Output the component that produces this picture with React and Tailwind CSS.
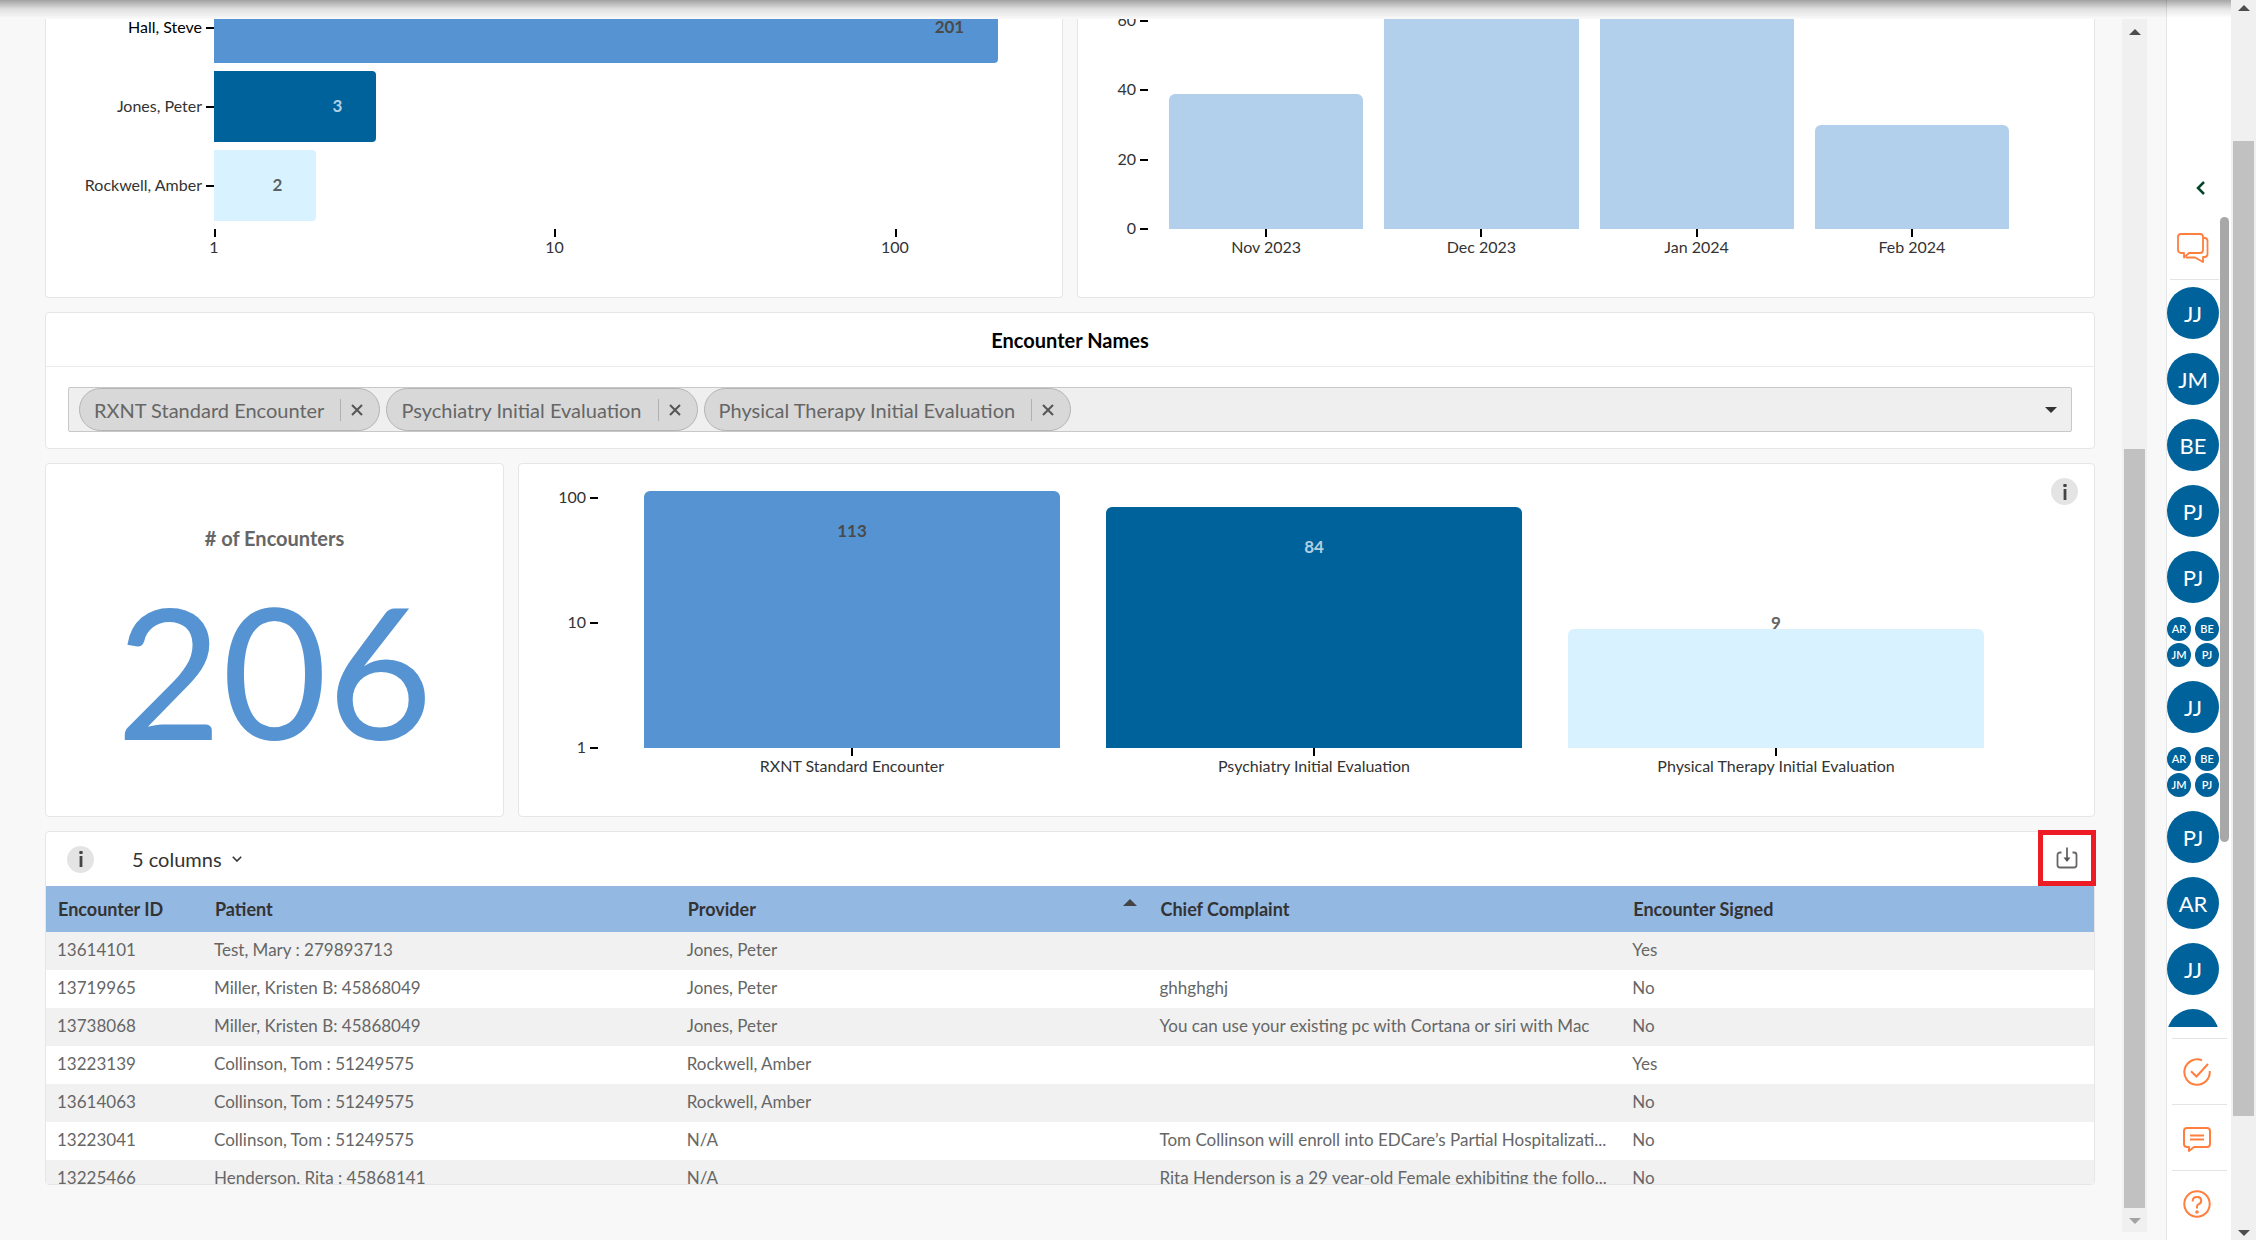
import React, { useState } from 'react';
import clsx from 'clsx';

const providers = [
    { name: 'Hall, Steve', value: 201, bar: 'bg-[#5593d2]', text: 'text-[#4a4a4a]', label: 'text-black' },
    { name: 'Jones, Peter', value: 3, bar: 'bg-[#00629b]', text: 'text-[#b3d0e1]', label: 'text-[#333]' },
    { name: 'Rockwell, Amber', value: 2, bar: 'bg-[#d9f2ff]', text: 'text-[#5a6266]', label: 'text-[#333]' },
];

const months = [
    { name: 'Nov 2023', value: 39 },
    { name: 'Dec 2023', value: 72 },
    { name: 'Jan 2024', value: 65 },
    { name: 'Feb 2024', value: 30 },
];

const encounterTypes = [
    { name: 'RXNT Standard Encounter', value: 113, bar: 'bg-[#5593d2]', text: 'text-[#4a4a4a]' },
    { name: 'Psychiatry Initial Evaluation', value: 84, bar: 'bg-[#00629b]', text: 'text-[#b3d0e1]' },
    { name: 'Physical Therapy Initial Evaluation', value: 9, bar: 'bg-[#d9f2ff]', text: 'text-[#666]' },
];

const columns = ['Encounter ID', 'Patient', 'Provider', 'Chief Complaint', 'Encounter Signed'];

const rows = [
    ['13614101', 'Test, Mary : 279893713', 'Jones, Peter', '', 'Yes'],
    ['13719965', 'Miller, Kristen B: 45868049', 'Jones, Peter', 'ghhghghj', 'No'],
    ['13738068', 'Miller, Kristen B: 45868049', 'Jones, Peter', 'You can use your existing pc with Cortana or siri with Mac', 'No'],
    ['13223139', 'Collinson, Tom : 51249575', 'Rockwell, Amber', '', 'Yes'],
    ['13614063', 'Collinson, Tom : 51249575', 'Rockwell, Amber', '', 'No'],
    ['13223041', 'Collinson, Tom : 51249575', 'N/A', 'Tom Collinson will enroll into EDCare’s Partial Hospitalizati...', 'No'],
    ['13225466', 'Henderson, Rita : 45868141', 'N/A', 'Rita Henderson is a 29 year-old Female exhibiting the follo...', 'No'],
];

const group = ['AR', 'BE', 'JM', 'PJ'];
const chats = ['JJ', 'JM', 'BE', 'PJ', 'PJ', group, 'JJ', group, 'PJ', 'AR', 'JJ', ''];

// Decades covered by the provider chart's log axis
const DECADES = 2.42;

const Card = ({ className, children }) => (
    <section className={clsx('bg-white border border-[#e6e6e6] rounded-sm', className)}>{children}</section>
);

const InfoButton = () => (
    <button type="button" aria-label="Info" className="size-[27px] rounded-full bg-[#e4e4e4] flex items-center justify-center">
        <svg viewBox="0 0 4 16" className="w-1 h-4" fill="#444">
            <rect x="0.3" y="0" width="3.4" height="3" rx="0.8" />
            <rect x="0.6" y="5" width="2.8" height="11" />
        </svg>
    </button>
);

const YAxis = ({ ticks, className }) => (
    <div className={clsx('flex flex-col justify-between text-base text-[#333]', className)}>
        {ticks.map(tick => (
            <div key={tick} className="h-0 flex items-center justify-end gap-1">
                <span className="pb-0.5">{tick}</span>
                <span className="w-2 h-0.5 bg-black" />
            </div>
        ))}
    </div>
);

const ProviderChart = () => (
    <Card className="border-t-0 rounded-t-none h-[279px] pr-6">
        <div className="h-[210px] overflow-hidden flex flex-col justify-end gap-2 pb-2">
            {providers.map(p => (
                <div key={p.name} className="h-[71px] shrink-0 flex items-center">
                    <div className={clsx('w-[168px] shrink-0 flex items-center justify-end gap-1 text-base', p.label)}>
                        <span className="pb-0.5">{p.name}</span>
                        <span className="w-2 h-0.5 bg-black" />
                    </div>
                    <div className="flex-1 h-full">
                        <div
                            className={clsx('h-full rounded-r-sm flex items-center justify-end pr-[34px] pb-0.5 text-[17px] font-bold', p.bar, p.text)}
                            style={{ width: `${(Math.log10(p.value) / DECADES) * 100}%` }}
                        >
                            {p.value}
                        </div>
                    </div>
                </div>
            ))}
        </div>
        <div className="flex pl-[168px] text-base leading-5 text-[#333]">
            {[1, 10, 100].map(tick => (
                <div key={tick} className="shrink-0" style={{ width: `${100 / DECADES}%` }}>
                    <div className="w-0.5 h-2 bg-black" />
                    <div className="w-0 flex justify-center">{tick}</div>
                </div>
            ))}
        </div>
    </Card>
);

const MonthChart = () => (
    <Card className="border-t-0 rounded-t-none h-[279px] pr-[85px]">
        <div className="h-[210px] flex">
            <YAxis ticks={[60, 40, 20, 0]} className="w-[70px] pt-0.5" />
            <div className="flex-1 flex items-end gap-[21px] pl-[21px] overflow-hidden">
                {months.map(m => (
                    <div
                        key={m.name}
                        className="flex-1 rounded-t-md bg-[#b2d0ec]"
                        style={{ height: `${Math.round((m.value * 52) / 15)}px` }}
                    />
                ))}
            </div>
        </div>
        <div className="flex gap-[21px] pl-[91px] text-base leading-5 text-[#333]">
            {months.map(m => (
                <div key={m.name} className="flex-1 flex flex-col items-center">
                    <div className="w-0.5 h-2 bg-black" />
                    {m.name}
                </div>
            ))}
        </div>
    </Card>
);

const EncounterNames = () => {
    const [selected, setSelected] = useState(encounterTypes.map(t => t.name));

    return (
        <Card className="h-[137px]">
            <h2 className="h-[54px] flex items-center justify-center border-b border-[#ebebeb] text-xl font-bold text-black">
                Encounter Names
            </h2>
            <div className="mt-5 mx-[22px] h-[45px] flex items-center gap-1.5 pl-2.5 pr-3.5 border border-[#c8c8c8] rounded-xs bg-[#efefef]">
                {selected.map(name => (
                    <div key={name} className="h-[43px] flex items-center pl-3.5 pr-4 rounded-full border border-[#b4b4b4] bg-[#d8d8d8] text-xl text-[#666]">
                        {name}
                        <span className="w-px h-[22px] ml-4 mr-2.5 bg-[#b0b0b0]" />
                        <button type="button" aria-label={`Remove ${name}`} onClick={() => setSelected(selected.filter(n => n !== name))}>
                            <svg viewBox="0 0 12 12" className="size-3" stroke="#555" strokeWidth="2">
                                <path d="M1 1l10 10M11 1L1 11" />
                            </svg>
                        </button>
                    </div>
                ))}
                <button type="button" aria-label="Show encounter names" className="ml-auto">
                    <svg viewBox="0 0 12 6" className="w-3 h-1.5" fill="#333">
                        <path d="M0 0h12L6 6z" />
                    </svg>
                </button>
            </div>
        </Card>
    );
};

const EncounterChart = () => (
    <Card className="flex-1 h-[354px] relative pt-7 pr-[110px]">
        <div className="absolute top-3.5 right-4">
            <InfoButton />
        </div>
        <div className="flex h-[256px]">
            <YAxis ticks={[100, 10, 1]} className="w-[79px] pt-1.5" />
            <div className="flex-1 flex items-end gap-[46px] pl-[46px]">
                {encounterTypes.map(t => {
                    const height = Math.round(Math.log10(t.value) * 125);
                    const outside = t.value < 10;
                    return (
                        <div key={t.name} className={clsx('flex-1 text-center text-[17px] leading-5 font-bold', t.text)}>
                            {outside && <div className="relative -mb-1">{t.value}</div>}
                            <div className={clsx('rounded-t-md pt-[30px]', t.bar)} style={{ height: `${height}px` }}>
                                {!outside && t.value}
                            </div>
                        </div>
                    );
                })}
            </div>
        </div>
        <div className="flex gap-[46px] pl-[125px] text-base leading-5 text-[#333]">
            {encounterTypes.map(t => (
                <div key={t.name} className="flex-1 flex flex-col items-center">
                    <div className="w-0.5 h-2 bg-black" />
                    {t.name}
                </div>
            ))}
        </div>
    </Card>
);

const EncounterTable = () => (
    <Card className="h-[354px] relative">
        <div className="h-[54px] flex items-center pl-[21px]">
            <InfoButton />
            <label className="ml-[38px] flex items-center gap-2.5 text-xl text-[#333]">
                <select aria-label="Columns" className="appearance-none outline-none">
                    <option>5 columns</option>
                </select>
                <svg viewBox="0 0 10 6" className="w-2.5 h-1.5" fill="none" stroke="#333" strokeWidth="1.6">
                    <path d="M0.8 0.8L5 5l4.2-4.2" />
                </svg>
            </label>
        </div>
        <button type="button" aria-label="Download" className="absolute -top-0.5 -right-0.5 w-[58px] h-14 border-[5px] border-[#ed1c24] flex items-center justify-center">
            <svg viewBox="0 0 22 22" className="size-[22px]" fill="none" stroke="#666" strokeWidth="1.8">
                <path d="M5.500 5.500H4A2.500 2.500 0 0 0 1.500 8v10A2.500 2.500 0 0 0 4 20.500h14a2.500 2.500 0 0 0 2.500-2.500V8A2.500 2.500 0 0 0 18 5.500h-1.500" />
                <path d="M11 0.500V12" />
                <path d="M7.500 10.500h7L11 15z" fill="#555" stroke="none" />
            </svg>
        </button>
        <div className="h-[298px] overflow-hidden">
            <table className="w-full table-fixed text-left">
                <thead className="bg-[#93b8e2] text-[#333]">
                    <tr className="h-[46px]">
                        {columns.map((name, i) => (
                            <th key={name} className={clsx('pl-3 text-lg font-bold', i === 0 && 'w-[157px]')}>
                                <div className="flex items-center justify-between pr-3">
                                    {name}
                                    {name === 'Provider' && (
                                        <svg viewBox="0 0 14 20" className="w-3.5 h-5" fill="#444">
                                            <path d="M0 7L7 0l7 7z" />
                                        </svg>
                                    )}
                                </div>
                            </th>
                        ))}
                    </tr>
                </thead>
                <tbody className="text-[17px] text-[#666]">
                    {rows.map(row => (
                        <tr key={row[0]} className="h-[38px] odd:bg-[#f1f1f1]">
                            {row.map((cell, i) => (
                                <td key={i} className="pl-[11px] pb-0.5 whitespace-nowrap">{cell}</td>
                            ))}
                        </tr>
                    ))}
                </tbody>
            </table>
        </div>
    </Card>
);

const Arrow = ({ up, color }) => (
    <svg viewBox="0 0 12 6" className="w-3 h-1.5 shrink-0" fill={color}>
        <path d={up ? 'M0 6L6 0l6 6z' : 'M0 0l6 6 6-6z'} />
    </svg>
);

const Avatar = ({ initials }) => (
    <button type="button" className="size-[52px] shrink-0 rounded-full bg-[#00629b] text-white text-[22px]">{initials}</button>
);

const ChatGroup = ({ members }) => (
    <button type="button" className="h-[50px] w-[52px] shrink-0 grid grid-cols-2 content-between">
        {members.map((m, i) => (
            <span key={m} className={clsx('size-6 rounded-full bg-[#00629b] text-white text-[11px] font-semibold flex items-center justify-center', i % 2 === 1 && 'justify-self-end')}>{m}</span>
        ))}
    </button>
);

const Sidebar = () => (
    <aside className="w-[65px] shrink-0 flex flex-col bg-white border-l border-[#e4e4e4]">
        <div className="h-[217px] shrink-0 flex items-end pl-[29px] pb-[22px]">
            <button type="button" aria-label="Expand">
                <svg viewBox="0 0 9 14" className="w-[9px] h-3.5" fill="none" stroke="#04452c" strokeWidth="2.5">
                    <path d="M8 1L2 7l6 6" />
                </svg>
            </button>
        </div>
        <div className="h-[810px] shrink-0 flex justify-between overflow-hidden pr-0.5">
            <div className="w-[52px] flex flex-col">
                <div className="h-[63px] shrink-0 ml-[3px] border-b border-[#e4e4e4] pt-4 pl-[7px]">
                    <svg viewBox="0 0 32 31" className="w-8 h-[31px]" fill="none" stroke="#ff7f3f" strokeWidth="1.8" strokeLinejoin="round">
                        <path d="M4 1h19a3 3 0 0 1 3 3v13a3 3 0 0 1-3 3H12l-5 4.500V20H4a3 3 0 0 1-3-3V4a3 3 0 0 1 3-3z" />
                        <path d="M26 5h1.500A3 3 0 0 1 30.500 8v13a3 3 0 0 1-3 3H26v5l-8-4.500H9" />
                    </svg>
                </div>
                <div className="flex flex-col gap-3.5 pt-[7px]">
                    {chats.map((chat, i) => (
                        Array.isArray(chat) ? <ChatGroup key={i} members={chat} /> : <Avatar key={i} initials={chat} />
                    ))}
                </div>
            </div>
            <div className="w-[9px] h-[625px] rounded-full bg-[#a8a8a8]" />
        </div>
        <div className="flex-1 flex flex-col pt-[11px] pl-[5px] pr-1 text-[#ff7f3f]">
            <button type="button" aria-label="Tasks" className="h-[66px] border-t border-[#e4e4e4] flex items-center justify-center pr-1.5">
                <svg viewBox="0 0 28 28" className="size-7" fill="none" stroke="currentColor" strokeWidth="2">
                    <path d="M19 2.400A12.700 12.700 0 1 0 26.700 13" />
                    <path d="M8 13.200l5.500 5.300L25 6" />
                </svg>
            </button>
            <button type="button" aria-label="Comments" className="h-[66px] border-t border-[#e4e4e4] flex items-center justify-center pr-1.5">
                <svg viewBox="0 -3 28 28" className="size-7" fill="none" stroke="currentColor" strokeWidth="2" strokeLinejoin="round">
                    <path d="M4 1h20a3 3 0 0 1 3 3v13a3 3 0 0 1-3 3H11l-5 4v-4H4a3 3 0 0 1-3-3V4a3 3 0 0 1 3-3z" />
                    <path d="M7 8.500h14M7 12.500h14" />
                </svg>
            </button>
            <button type="button" aria-label="Help" className="h-[66px] border-t border-[#e4e4e4] flex items-center justify-center pr-1.5">
                <svg viewBox="0 0 28 28" className="size-7" fill="none" stroke="currentColor" strokeWidth="2">
                    <circle cx="14" cy="14" r="12.7" />
                    <path d="M9.700 11.500V10.500a4 4 0 0 1 4-3.500h1a3.700 3.700 0 0 1 1 7.200c-1.200.5-1.700 1-1.700 2.300v2" />
                    <circle cx="14" cy="22" r="0.8" fill="currentColor" />
                </svg>
            </button>
        </div>
    </aside>
);

const App = () => (
    <div className="h-screen flex relative overflow-hidden bg-[#f8f8f8] font-['Lato',sans-serif]">
        <div className="flex-1 min-w-0 flex pt-[19px] pb-2">
            <main className="flex-1 min-w-0 overflow-hidden flex flex-col gap-3.5 pl-[45px] pr-[27px]">
                <div className="grid grid-cols-2 gap-3.5">
                    <ProviderChart />
                    <MonthChart />
                </div>
                <EncounterNames />
                <div className="flex gap-3.5">
                    <Card className="w-[459px] h-[354px] flex flex-col items-center pt-15">
                        <h2 className="text-xl font-bold text-[#666]"># of Encounters</h2>
                        <p className="text-[182px] leading-[236px] text-[#5593d2]">206</p>
                    </Card>
                    <EncounterChart />
                </div>
                <EncounterTable />
            </main>
            <div className="w-[25px] mr-[19px] shrink-0 flex flex-col items-center bg-[#f0f0f0] pt-2.5 pb-2">
                <Arrow up color="#4d4d4d" />
                <div className="w-[21px] h-[759px] mt-auto mb-2.5 bg-[#c1c1c1]" />
                <Arrow color="#a3a3a3" />
            </div>
        </div>
        <Sidebar />
        <div className="w-[25px] shrink-0 flex flex-col items-center bg-[#f0f0f0] pt-[5px] pb-1">
            <Arrow up color="#4d4d4d" />
            <div className="w-[21px] h-[975px] mt-[130px] mb-auto bg-[#c1c1c1]" />
            <Arrow color="#4d4d4d" />
        </div>
        {/* Shadow of the top bar */}
        <div className="absolute top-0 left-0 right-[25px] h-[18px] pointer-events-none bg-linear-to-b from-black/35 via-black/10 to-transparent" />
    </div>
);

export default App;
